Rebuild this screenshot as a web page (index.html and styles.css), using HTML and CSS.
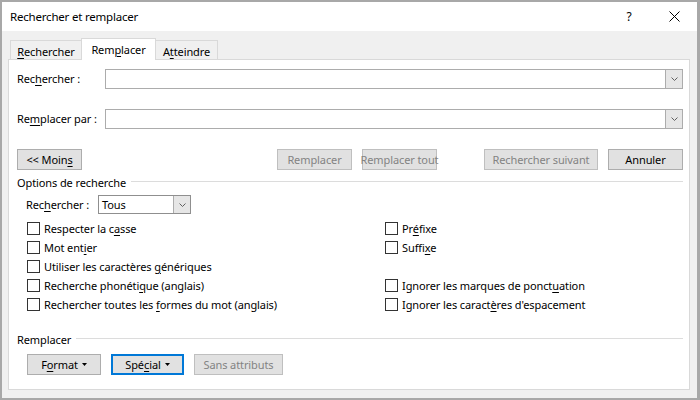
FILE: index.html
```html
<!DOCTYPE html>
<html lang="fr">
<head>
<meta charset="utf-8">
<title>Rechercher et remplacer</title>
<link rel="stylesheet" href="styles.css">
</head>
<body>
<div class="window">
  <div class="titlebar">
    <span class="title">Rechercher et remplacer</span>
    <div class="caption-btn help">?</div>
    <div class="caption-btn">
      <svg width="11" height="11" viewBox="0 0 11 11"><path d="M0.5 0.5L10.5 10.5M10.5 0.5L0.5 10.5" stroke="#000" stroke-width="1" fill="none"/></svg>
    </div>
  </div>
  <div class="client">
    <div class="tabs">
      <div class="tab tab-find"><u>R</u>echercher</div>
      <div class="tab tab-replace">Rem<u>p</u>lacer</div>
      <div class="tab tab-goto">A<u>t</u>teindre</div>
    </div>
    <div class="panel">
      <div class="field-row">
        <span class="field-label">Rec<u>h</u>ercher :</span>
        <div class="combo">
          <div class="combo-btn"><svg width="7" height="4" viewBox="0 0 7 4"><path d="M0.5 0.5L3.5 3.5L6.5 0.5" stroke="#606060" fill="none"/></svg></div>
        </div>
      </div>
      <div class="field-row">
        <span class="field-label">Re<u>m</u>placer par :</span>
        <div class="combo">
          <div class="combo-btn"><svg width="7" height="4" viewBox="0 0 7 4"><path d="M0.5 0.5L3.5 3.5L6.5 0.5" stroke="#606060" fill="none"/></svg></div>
        </div>
      </div>
      <div class="btn-row">
        <div class="btn btn-less">&lt;&lt; Moin<u>s</u></div>
        <div class="btn disabled btn-replace">Remplacer</div>
        <div class="btn disabled btn-replace-all">Remplacer tout</div>
        <div class="btn disabled btn-next">Rechercher suivant</div>
        <div class="btn btn-cancel">Annuler</div>
      </div>
      <div class="group-header">
        <span>Options de recherche</span>
        <div class="group-line"></div>
      </div>
      <div class="search-row">
        <span class="search-label">Rec<u>h</u>ercher :</span>
        <div class="select">
          <span class="select-text">Tous</span>
          <div class="select-btn"><svg width="7" height="4" viewBox="0 0 7 4"><path d="M0.5 0.5L3.5 3.5L6.5 0.5" stroke="#606060" fill="none"/></svg></div>
        </div>
      </div>
      <div class="checks">
        <div class="check"><span class="box"></span><span>Respecter la c<u>a</u>sse</span></div>
        <div class="check"><span class="box"></span><span>Pr<u>é</u>fixe</span></div>
        <div class="check"><span class="box"></span><span>Mot ent<u>i</u>er</span></div>
        <div class="check"><span class="box"></span><span>Suffi<u>x</u>e</span></div>
        <div class="check"><span class="box"></span><span>Utiliser les caractères <u>g</u>énériques</span></div>
        <div class="check empty"></div>
        <div class="check"><span class="box"></span><span>Recherche phonéti<u>q</u>ue (anglais)</span></div>
        <div class="check"><span class="box"></span><span>Ignorer les marques de ponct<u>u</u>ation</span></div>
        <div class="check"><span class="box"></span><span>Rechercher toutes les <u>f</u>ormes du mot (anglais)</span></div>
        <div class="check"><span class="box"></span><span>Ignorer les caract<u>è</u>res d'espacement</span></div>
      </div>
      <div class="group-header group-replace">
        <span>Remplacer</span>
        <div class="group-line"></div>
      </div>
      <div class="bottom-row">
        <div class="btn btn-format">F<u>o</u>rmat<svg class="caret" width="5" height="3" viewBox="0 0 5 3"><path d="M0 0H5L2.5 3Z" fill="#000"/></svg></div>
        <div class="btn btn-special focused">Spé<u>c</u>ial<svg class="caret" width="5" height="3" viewBox="0 0 5 3"><path d="M0 0H5L2.5 3Z" fill="#000"/></svg></div>
        <div class="btn disabled btn-noattr">Sans attributs</div>
      </div>
    </div>
  </div>
</div>
</body>
</html>
```
FILE: styles.css
```css
* { box-sizing: border-box; }
html, body { margin: 0; padding: 0; }
body {
  width: 700px;
  height: 400px;
  font-family: "Noto Sans", "Open Sans", sans-serif;
  font-size: 11px;
  letter-spacing: -0.1px;
  line-height: 14px;
  color: #000;
  background: #fff;
  white-space: nowrap;
}
u { text-decoration: underline; text-underline-offset: 2px; text-decoration-thickness: 1px; }

.window {
  width: 700px;
  height: 400px;
  border-style: solid;
  border-color: #a8a8a8;
  border-width: 2px 3px 2px 2px;
  display: flex;
  flex-direction: column;
  background: #f0f0f0;
}

.titlebar {
  height: 29px;
  background: #fff;
  display: flex;
  align-items: center;
}
.title { flex: 1; padding-left: 8px; font-size: 11.5px; letter-spacing: -0.2px; }
.caption-btn {
  width: 46px;
  height: 29px;
  display: flex;
  align-items: center;
  justify-content: center;
}
.help { font-size: 12px; padding-left: 2px; }

.client {
  flex: 1;
  display: flex;
  flex-direction: column;
  padding: 7px 7px 8px 6px;
}

.tabs {
  display: flex;
  align-items: flex-end;
  height: 21px;
  padding-left: 2px;
}
.tab {
  height: 19px;
  border: 1px solid #d9d9d9;
  border-bottom: none;
  background: #f0f0f0;
  display: flex;
  align-items: center;
  justify-content: center;
  padding-top: 3px;
}
.tab-find { width: 72px; }
.tab-replace {
  width: 75px;
  height: 22px;
  margin-left: -1px;
  margin-bottom: -1px;
  padding-top: 1px;
  background: #fff;
  position: relative;
  z-index: 1;
}
.tab-goto { width: 63px; margin-left: -1px; }

.panel {
  background: #fff;
  border: 1px solid #d9d9d9;
  padding: 9px 6px 14px 8px;
  display: flex;
  flex-direction: column;
}

.field-row { display: flex; align-items: center; height: 20px; }
.field-row + .field-row { margin-top: 20px; }
.field-label { width: 88px; }
.combo {
  flex: 1;
  height: 20px;
  border: 1px solid #acacac;
  background: #fff;
  display: flex;
  justify-content: flex-end;
}
.combo-btn {
  width: 17px;
  background: #e6e6e6;
  border-left: 1px solid #acacac;
  display: flex;
  align-items: center;
  justify-content: center;
}

.btn-row { display: flex; margin-top: 20px; height: 21px; }
.btn {
  height: 21px;
  border: 1px solid #adadad;
  background: #e1e1e1;
  display: flex;
  align-items: center;
  justify-content: center;
}
.btn.disabled { color: #838383; border-color: #bfbfbf; }
.btn-less { width: 65px; margin-right: auto; }
.btn-replace { width: 75px; }
.btn-replace-all { width: 75px; margin-left: 10px; }
.btn-next { width: 114px; margin-left: 47px; }
.btn-cancel { width: 75px; margin-left: 10px; }

.group-header {
  display: flex;
  align-items: center;
  height: 14px;
  margin-top: 6px;
}
.group-line {
  flex: 1;
  height: 1px;
  background: #dcdcdc;
  margin-left: 5px;
  margin-top: -3px;
}
.group-replace { margin-top: 19px; }

.search-row {
  display: flex;
  align-items: center;
  height: 19px;
  margin-top: 5px;
  padding-left: 9px;
}
.search-label { width: 72px; }
.select {
  width: 93px;
  height: 19px;
  border: 1px solid #8f8f8f;
  background: #fff;
  display: flex;
}
.select-text { flex: 1; padding-left: 3px; display: flex; align-items: center; }
.select-btn {
  width: 17px;
  background: #e6e6e6;
  border-left: 1px solid #acacac;
  display: flex;
  align-items: center;
  justify-content: center;
}

.checks {
  display: grid;
  grid-template-columns: 358px 1fr;
  grid-auto-rows: 19px;
  margin-top: 5px;
  padding-left: 10px;
}
.check { display: flex; align-items: center; gap: 4px; }
.box {
  width: 13px;
  height: 13px;
  border: 1px solid #333;
  background: #fff;
  flex: none;
}

.bottom-row {
  display: flex;
  gap: 10px;
  margin-top: 7px;
  padding-left: 10px;
}
.btn-format { width: 74px; }
.btn-special { width: 73px; }
.btn-noattr { width: 89px; }
.btn.focused { border: 2px solid #0078d7; }
.caret { margin-left: 4px; }
```
